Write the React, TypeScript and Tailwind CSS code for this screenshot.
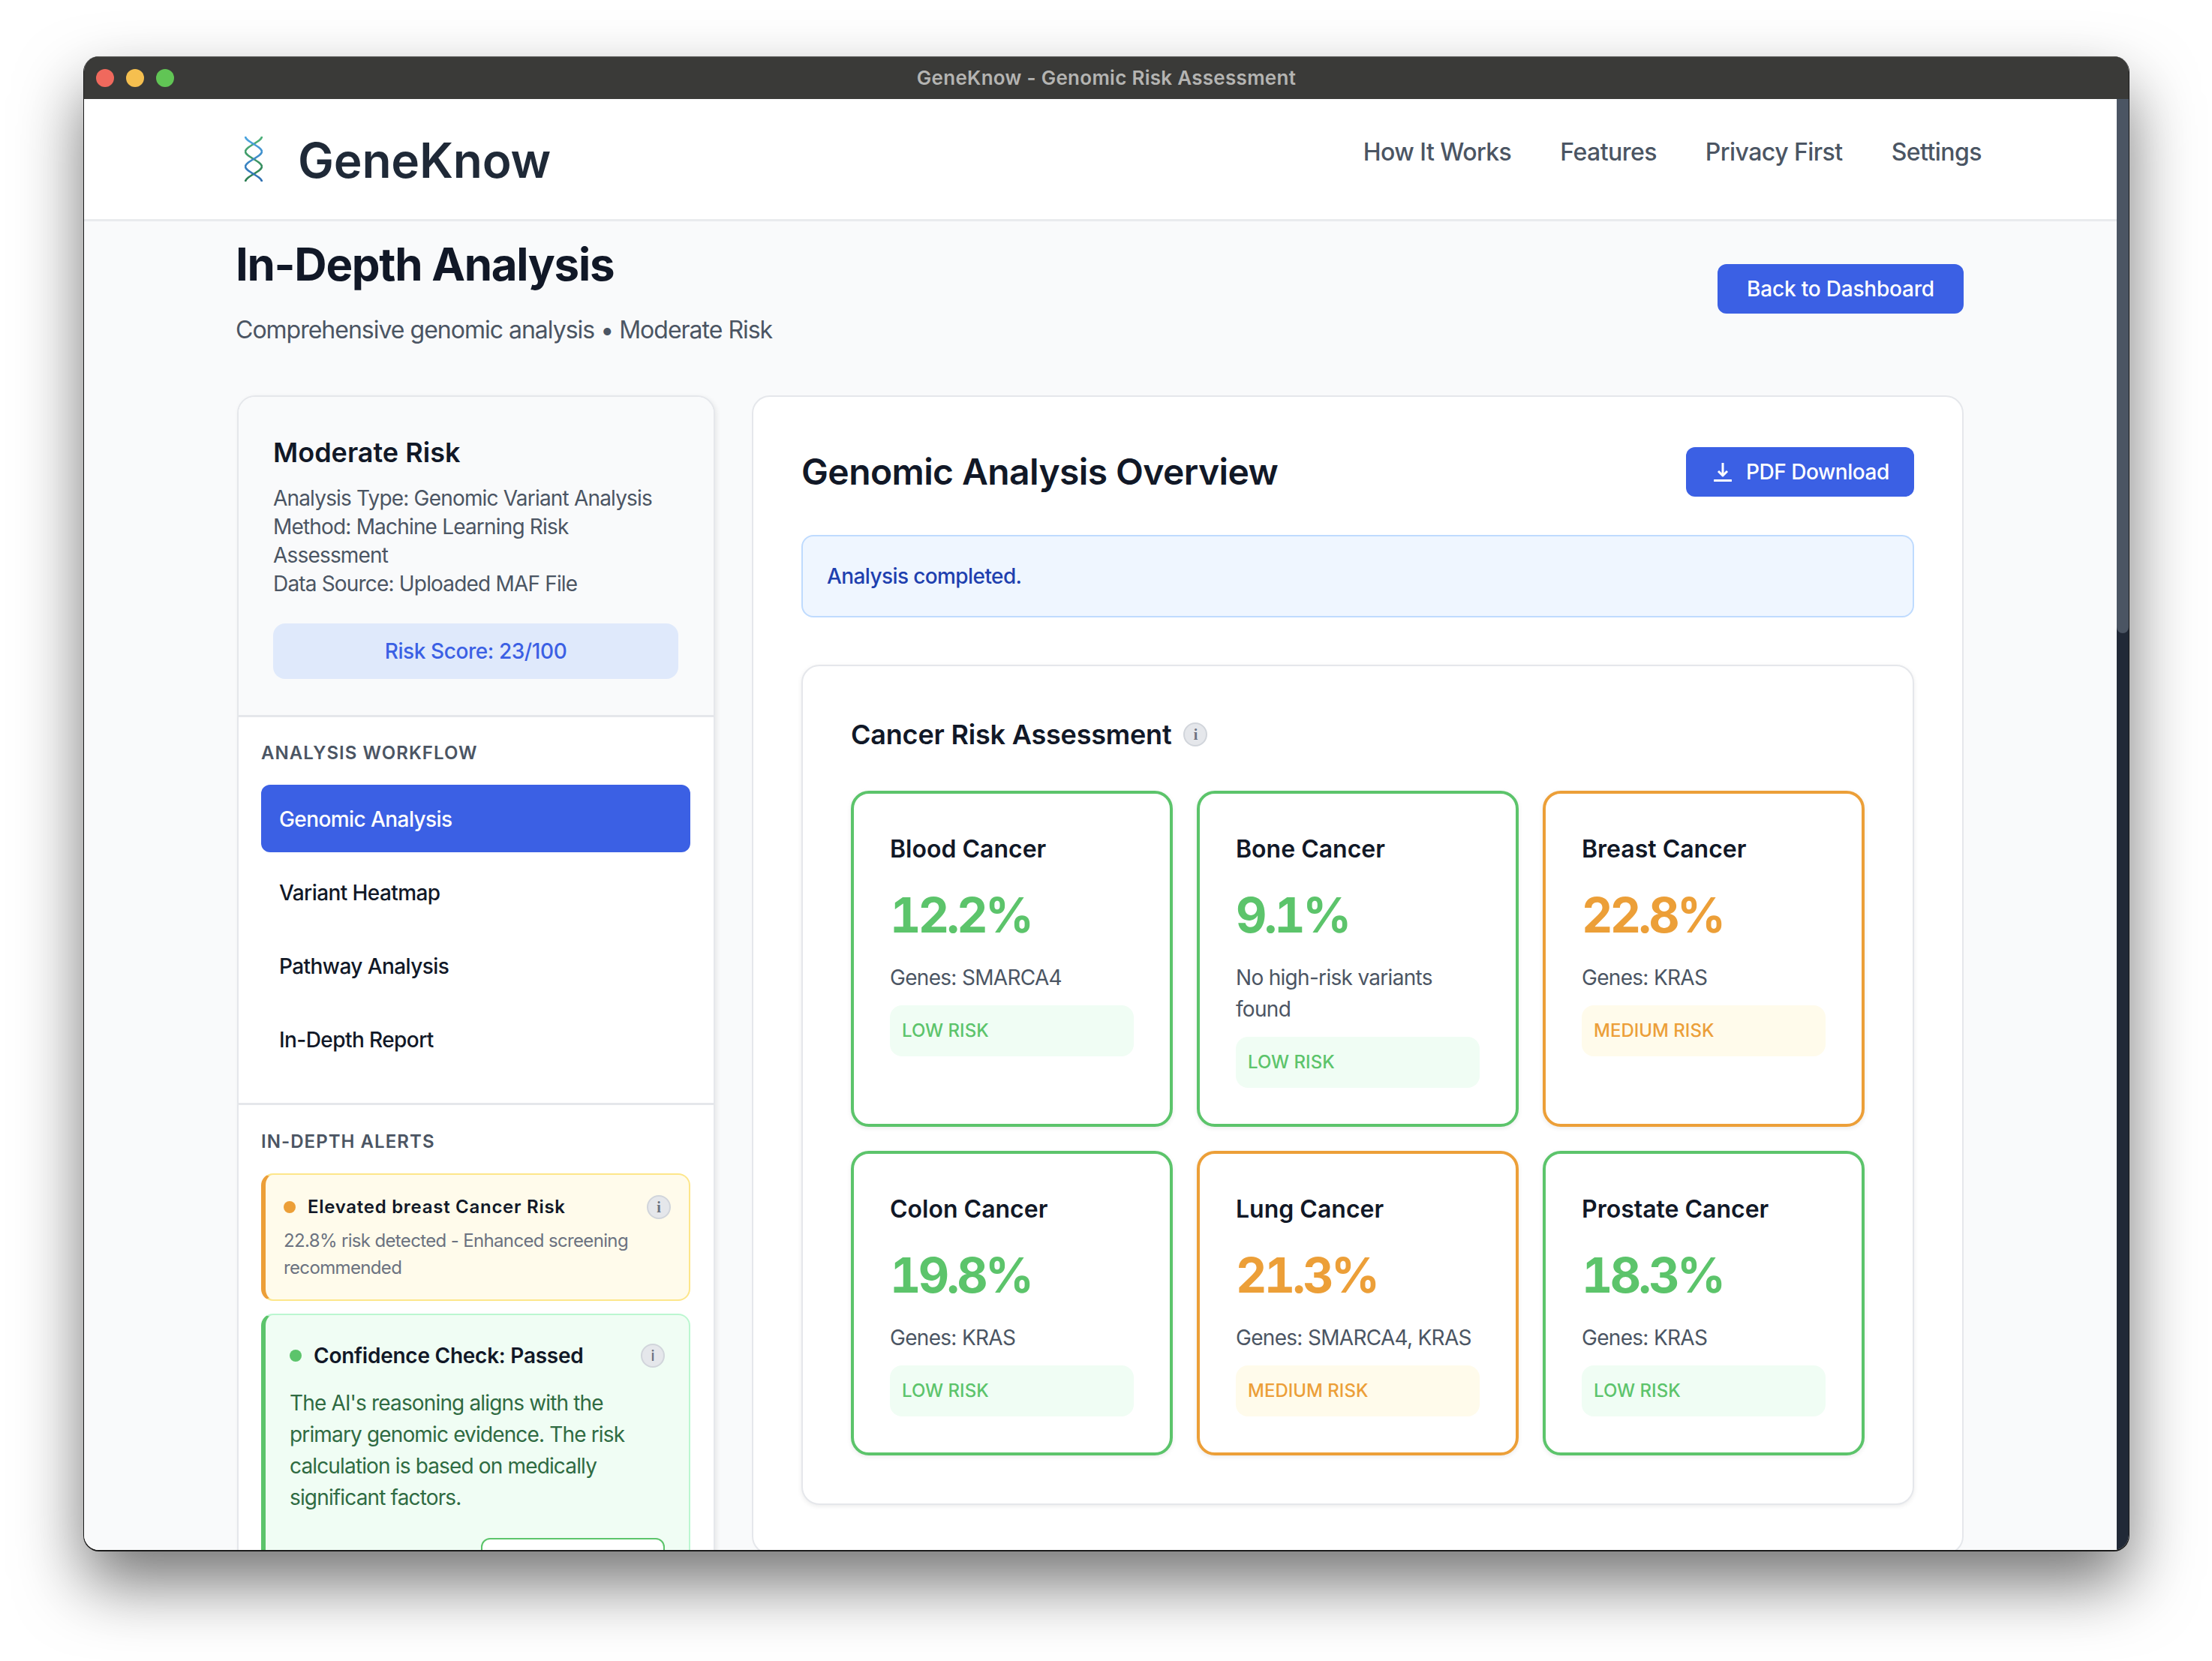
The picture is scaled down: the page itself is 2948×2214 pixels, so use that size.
import { ReactNode } from 'react'

const navLinks = ['How It Works', 'Features', 'Privacy First', 'Settings']

const workflow = ['Genomic Analysis', 'Variant Heatmap', 'Pathway Analysis', 'In-Depth Report']

const risks = [
  { name: 'Blood Cancer', pct: '12.2%', genes: 'Genes: SMARCA4', level: 'low' },
  { name: 'Bone Cancer', pct: '9.1%', genes: 'No high-risk variants found', level: 'low' },
  { name: 'Breast Cancer', pct: '22.8%', genes: 'Genes: KRAS', level: 'medium' },
  { name: 'Colon Cancer', pct: '19.8%', genes: 'Genes: KRAS', level: 'low' },
  { name: 'Lung Cancer', pct: '21.3%', genes: 'Genes: SMARCA4, KRAS', level: 'medium' },
  { name: 'Prostate Cancer', pct: '18.3%', genes: 'Genes: KRAS', level: 'low' },
]

function DnaLogo() {
  return (
    <svg width="24" height="60" viewBox="0 0 24 60" fill="none" className="shrink-0">
      <defs>
        <linearGradient id="strandA" gradientUnits="userSpaceOnUse" x1="0" y1="0" x2="0" y2="60">
          <stop offset="0" stopColor="#4ea6e0" />
          <stop offset="1" stopColor="#2f6fb0" />
        </linearGradient>
        <linearGradient id="strandB" gradientUnits="userSpaceOnUse" x1="0" y1="0" x2="0" y2="60">
          <stop offset="0" stopColor="#50b27c" />
          <stop offset="1" stopColor="#2c7d52" />
        </linearGradient>
      </defs>
      <path d="M23 0C23 7 1 13 1 20C1 27 23 33 23 40C23 47 1 53 1 60" stroke="url(#strandB)" strokeWidth="2.6" />
      <path d="M1 0C1 7 23 13 23 20C23 27 1 33 1 40C1 47 23 53 23 60" stroke="url(#strandA)" strokeWidth="2.6" />
    </svg>
  )
}

function DownloadIcon() {
  return (
    <svg width="24" height="28" viewBox="0 0 24 28" fill="none" stroke="white" strokeWidth="3" strokeLinejoin="round" className="shrink-0">
      <path d="M12 2V18" />
      <path d="M6 13L12 19L18 13" />
      <path d="M1 25.5H23" strokeLinecap="round" />
    </svg>
  )
}

function InfoDot({ serif = true }: { serif?: boolean }) {
  return (
    <span
      className={`flex h-[32px] w-[32px] shrink-0 items-center justify-center rounded-full border-2 border-[#d1d5db] bg-[#e5e7eb] text-[20px] leading-none text-[#6b7280] ${
        serif ? "font-['Liberation_Serif',serif] font-bold" : 'font-medium'
      }`}
    >
      i
    </span>
  )
}

function SideHeading({ children }: { children: ReactNode }) {
  return <h3 className="text-[24px] leading-[36px] font-semibold tracking-[1.05px] text-[#4b5563]">{children}</h3>
}

function RiskCard({ name, pct, genes, level }: { name: string; pct: string; genes: string; level: string }) {
  const low = level === 'low'
  return (
    <div
      className={`rounded-[24px] border-4 bg-white px-[48px] pt-[50px] pb-[48px] shadow-[0_2px_6px_rgba(0,0,0,0.08)] ${
        low ? 'border-[#5cc46b]' : 'border-[#ec9f38]'
      }`}
    >
      <h4 className="text-[32px] leading-[48px] font-semibold text-[#111827]">{name}</h4>
      <div className={`mt-[16px] text-[64px] leading-[96px] font-bold tracking-[-3.6px] tabular-nums ${low ? 'text-[#5cc46b]' : 'text-[#ec9f38]'}`}>{pct}</div>
      <p className="mt-[14px] text-[28px] leading-[42px] tracking-[-0.7px] text-[#4b5563]">{genes}</p>
      <div
        className={`mt-[16px] flex h-[68px] items-center rounded-[16px] px-[16px] text-[24px] font-medium ${
          low ? 'bg-[#f0fdf4] text-[#5cc46b]' : 'bg-[#fffbeb] text-[#ec9f38]'
        }`}
      >
        {low ? 'LOW RISK' : 'MEDIUM RISK'}
      </div>
    </div>
  )
}

export default function App() {
  return (
    <div className="h-[2214px] w-[2948px] overflow-hidden bg-white pt-[75px] pl-[112px] font-['Inter',sans-serif]">
      <div className="flex h-[1991px] w-[2725px] flex-col overflow-hidden rounded-[20px] shadow-[0_1px_0_1px_#1a1a1a,0_44px_88px_rgba(0,0,0,0.55)]">
        {/* title bar */}
        <div className="grid h-[57px] shrink-0 grid-cols-[1fr_auto_1fr] items-center border-t border-[#6b6b69] bg-[#3a3a38]">
          <div className="flex gap-[16px] pl-[16px]">
            <span className="h-[24px] w-[24px] rounded-full bg-[#f0695d]" />
            <span className="h-[24px] w-[24px] rounded-full bg-[#f5bf4f]" />
            <span className="h-[24px] w-[24px] rounded-full bg-[#61c555]" />
          </div>
          <div className="mb-[2px] text-[26px] font-semibold tracking-[0.28px] text-[#b4b4b2]">GeneKnow - Genomic Risk Assessment</div>
          <div />
        </div>

        <div className="flex min-h-0 flex-1">
          <div className="min-w-0 flex-1 overflow-hidden bg-[#f9fafb]">
            {/* site header */}
            <header className="flex h-[163px] items-center justify-between border-b-[3px] border-[#e9ebee] bg-white pr-[180px] pl-[214px]">
              <div className="flex items-center gap-[47px]">
                <DnaLogo />
                <span className="mt-[3px] text-[64px] leading-none font-semibold tracking-[-0.2px] text-[#1f2937]">GeneKnow</span>
              </div>
              <nav className="mb-[18px] flex gap-[65px] text-[32px] font-medium tracking-[-0.55px] text-[#4b5563]">
                {navLinks.map((l) => (
                  <a key={l}>{l}</a>
                ))}
              </nav>
            </header>

            <div className="px-[204px] pt-[21px]">
              <div className="flex items-start justify-between">
                <div className="-ml-[2px]">
                  <h1 className="text-[60px] leading-[72px] font-bold tracking-[-1.3px] text-[#111827]">In-Depth Analysis</h1>
                  <p className="mt-[28px] text-[32px] leading-[48px] tracking-[-1px] text-[#4b5563]">Comprehensive genomic analysis • Moderate Risk</p>
                </div>
                <button className="mt-[36px] h-[66px] w-[328px] rounded-[12px] bg-[#3b60e4] text-[28px] font-medium tracking-[-0.2px] text-white">
                  Back to Dashboard
                </button>
              </div>

              <div className="mt-[63px] flex items-start gap-[49px]">
                {/* sidebar */}
                <aside className="w-[637px] shrink-0 overflow-hidden rounded-[24px] border-2 border-[#e5e7eb] bg-white shadow-[2px_2px_6px_rgba(0,0,0,0.08)]">
                  <div className="border-b-[3px] border-[#e5e7eb] bg-[#f9fafb] pt-[47px] pr-[47px] pb-[48px] pl-[46px]">
                    <h2 className="text-[36px] leading-[54px] font-semibold text-[#111827]">Moderate Risk</h2>
                    <p className="mt-[15px] text-[28px] leading-[38px] tracking-[-0.82px] text-[#4b5563]">
                      Analysis Type: Genomic Variant Analysis
                      <br />
                      Method: Machine Learning Risk Assessment
                      <br />
                      Data Source: Uploaded MAF File
                    </p>
                    <div className="mt-[34px] flex h-[74px] items-center justify-center rounded-[16px] bg-[#dfe9fb] text-[28px] font-medium tracking-[-0.42px] text-[#3b60e4]">
                      Risk Score: 23/100
                    </div>
                  </div>

                  <div className="border-b-[3px] border-[#e5e7eb] pt-[30px] pr-[31px] pb-[40px] pl-[30px]">
                    <SideHeading>ANALYSIS WORKFLOW</SideHeading>
                    <div className="mt-[24px] flex flex-col gap-[8px]">
                      {workflow.map((w, i) => (
                        <div
                          key={w}
                          className={`flex h-[90px] items-center rounded-[12px] px-[24px] pt-[2px] text-[28px] font-medium tracking-[-0.58px] ${
                            i === 0 ? 'bg-[#3b60e4] text-white' : 'text-[#111827]'
                          }`}
                        >
                          {w}
                        </div>
                      ))}
                    </div>
                  </div>

                  <div className="pt-[31px] pr-[31px] pl-[30px]">
                    <SideHeading>IN-DEPTH ALERTS</SideHeading>
                    <div className="mt-[24px] rounded-[16px] border-2 border-l-[6px] border-[#fde68a] border-l-[#ec9f38] bg-[#fffbeb] pt-[25px] pr-[24px] pb-[24px] pl-[24px]">
                      <div className="flex items-center">
                        <span className="h-[16px] w-[16px] shrink-0 rounded-full bg-[#ec9f38]" />
                        <span className="ml-[16px] flex-1 text-[24px] leading-[36px] font-semibold tracking-[0.72px] text-[#111827]">Elevated breast Cancer Risk</span>
                        <InfoDot />
                      </div>
                      <p className="mt-[9px] text-[24px] leading-[36px] tracking-[-0.65px] text-[#6b7280]">22.8% risk detected - Enhanced screening recommended</p>
                    </div>
                    <div className="mt-[17px] rounded-[16px] border-2 border-l-[6px] border-[#bbf7d0] border-l-[#5cc46b] bg-[#f0fdf4] px-[32px] pt-[33px] pb-[32px]">
                      <div className="flex items-center">
                        <span className="h-[16px] w-[16px] shrink-0 rounded-full bg-[#5cc46b]" />
                        <span className="ml-[16px] flex-1 text-[28px] leading-[42px] font-semibold tracking-[-0.25px] text-[#111827]">Confidence Check: Passed</span>
                        <InfoDot serif={false} />
                      </div>
                      <p className="mt-[21px] w-[470px] text-[28px] leading-[42px] tracking-[-0.85px] text-[#2f6b42]">
                        The AI's reasoning aligns with the primary genomic evidence. The risk calculation is based on medically significant factors.
                      </p>
                      <div className="mt-[33px] ml-auto h-[60px] w-[245px] rounded-[12px] border-2 border-[#5cc46b] bg-white" />
                    </div>
                  </div>
                </aside>

                {/* main panel */}
                <main className="min-w-0 flex-1 rounded-[24px] border-2 border-[#e5e7eb] bg-white px-[64px] pt-[67px] pb-[64px]">
                  <div className="flex items-center justify-between">
                    <h2 className="text-[48px] leading-[66px] font-semibold tracking-[-0.6px] text-[#111827]">Genomic Analysis Overview</h2>
                    <button className="flex h-[66px] w-[304px] items-center gap-[19px] rounded-[12px] bg-[#3b60e4] pl-[37px] text-[28px] font-medium tracking-[-0.45px] text-white">
                      <DownloadIcon />
                      PDF Download
                    </button>
                  </div>

                  <div className="mt-[51px] flex h-[110px] items-center rounded-[16px] border-2 border-[#bfdbfe] bg-[#eff6ff] px-[32px] text-[28px] font-medium tracking-[-0.6px] text-[#1e40af]">
                    Analysis completed.
                  </div>

                  <section className="mt-[63px] rounded-[24px] border-2 border-[#e5e7eb] bg-white p-[64px] shadow-[0_2px_6px_rgba(0,0,0,0.08)]">
                    <div className="mb-[48px] flex items-center gap-[16px]">
                      <h3 className="text-[36px] leading-[54px] font-semibold tracking-[-0.2px] text-[#111827]">Cancer Risk Assessment</h3>
                      <InfoDot />
                    </div>
                    <div className="grid grid-cols-3 gap-[32px]">
                      {risks.map((r) => (
                        <RiskCard key={r.name} {...r} />
                      ))}
                    </div>
                  </section>
                </main>
              </div>
            </div>
          </div>

          {/* scrollbar */}
          <div className="w-[16px] shrink-0 bg-[#212937]">
            <div className="h-[712px] rounded-b-[8px] bg-[#4b5563]" />
          </div>
        </div>
      </div>
    </div>
  )
}
